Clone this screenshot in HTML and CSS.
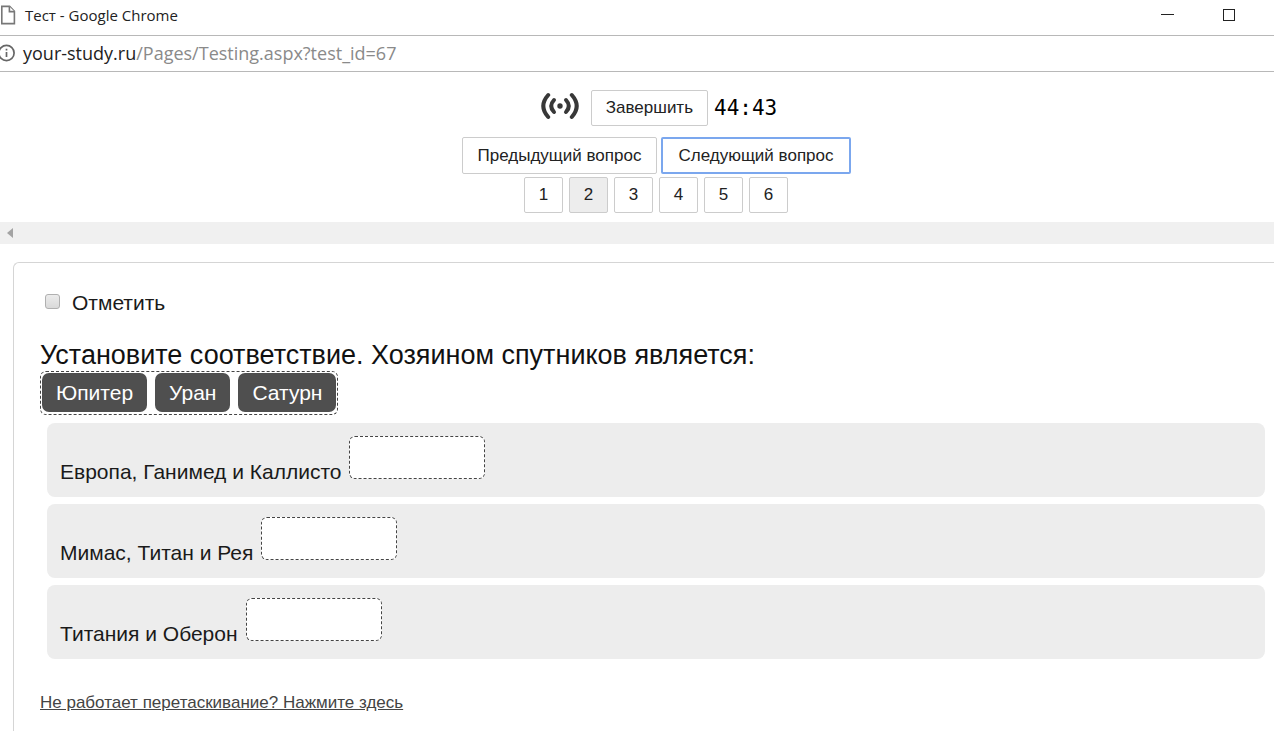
FILE: index.html
```html
<!DOCTYPE html>
<html lang="ru">
<head>
<meta charset="utf-8">
<title>Тест</title>
<link rel="stylesheet" href="styles.css">
</head>
<body>
<div class="titlebar">
  <svg class="page-icon" width="16" height="20" viewBox="0 0 16 20" fill="#fff" stroke="#777" stroke-width="1.6"><path d="M1.8 1.4h7.8l4.8 5v12.2H1.8z"/><path d="M9.4 1.6v5h5"/></svg>
  <span class="window-title">Тест - Google Chrome</span>
  <svg class="window-controls" width="80" height="20" viewBox="0 0 80 20" fill="none" stroke="#222"><path d="M1 9.5h13"/><rect x="63.5" y="4.5" width="11" height="11"/></svg>
</div>
<div class="addressbar">
  <svg class="info-icon" width="16" height="18" viewBox="0 0 16 18" fill="none" stroke="#666" stroke-width="1.7"><circle cx="6.5" cy="9" r="7.6"/><path d="M6.5 8v5M6.5 4.8v1.8"/></svg>
  <span class="url">your-study.ru<span class="url-path">/Pages/Testing.aspx?test_id=67</span></span>
</div>
<header class="controls">
  <div class="status">
    <svg class="signal" width="38" height="30" viewBox="0 0 38 30" fill="none" stroke="#383838" stroke-linecap="round"><circle cx="19" cy="15" r="2.7" fill="#383838" stroke="none"/><g stroke-width="4"><path d="M13 9Q7.4 15 13 21M25 9Q30.6 15 25 21"/><path d="M7.2 4Q-2.6 15 7.2 26M30.8 4Q40.6 15 30.8 26"/></g></svg>
    <button class="btn finish" type="button">Завершить</button>
    <span class="timer">44:43</span>
  </div>
  <div class="nav">
    <button class="btn nav-btn" type="button">Предыдущий вопрос</button>
    <button class="btn nav-btn focused" type="button">Следующий вопрос</button>
  </div>
  <nav class="pages">
    <button class="btn page" type="button">1</button>
    <button class="btn page current" type="button">2</button>
    <button class="btn page" type="button">3</button>
    <button class="btn page" type="button">4</button>
    <button class="btn page" type="button">5</button>
    <button class="btn page" type="button">6</button>
  </nav>
</header>
<div class="scrollbar"><svg width="6" height="10" viewBox="0 0 6 10" fill="#a3a3a3"><path d="M6 0v10L0 5z"/></svg></div>
<main class="card">
  <label class="mark"><input class="mark-box" type="checkbox">Отметить</label>
  <h1 class="question">Установите соответствие. Хозяином спутников является:</h1>
  <div class="bank">
    <span class="chip" draggable="true">Юпитер</span>
    <span class="chip" draggable="true">Уран</span>
    <span class="chip" draggable="true">Сатурн</span>
  </div>
  <div class="rows">
    <div class="row"><span class="row-text">Европа, Ганимед и Каллисто</span><span class="slot"></span></div>
    <div class="row"><span class="row-text">Мимас, Титан и Рея</span><span class="slot"></span></div>
    <div class="row"><span class="row-text">Титания и Оберон</span><span class="slot"></span></div>
  </div>
  <a class="help" href="#">Не работает перетаскивание? Нажмите здесь</a>
</main>
</body>
</html>
```
FILE: styles.css
```css
* { box-sizing: border-box; }
body {
  margin: 0;
  background: #fff;
  color: #1a1a1a;
  font-family: "Liberation Sans", Arial, sans-serif;
  overflow: hidden;
}
.titlebar, .addressbar {
  display: flex;
  align-items: center;
  height: 36px;
  border-bottom: 1px solid #b8b8b8;
  font-family: "Open Sans", "Segoe UI", sans-serif;
}
.titlebar { padding: 0 34px 6px 0; font-size: 15px; color: #222; }
.page-icon { margin-right: 9px; }
.window-controls { margin-left: auto; }
.addressbar { padding-bottom: 2px; }
.info-icon { margin-right: 7px; }
.url { font-size: 18px; color: #222; }
.url-path { color: #8a8a8a; }
.controls {
  display: flex;
  flex-direction: column;
  align-items: center;
  padding: 18px 0 9px 38px;
}
.status { display: flex; align-items: center; margin: 0 0 11px 6px; }
.signal { margin: 0 12px 4px 0; }
.btn {
  height: 36px;
  padding: 0;
  border: 1px solid #ccc;
  border-radius: 2px;
  background: #fff;
  color: #222;
  font-family: inherit;
  font-size: 17px;
}
.finish { padding: 0 14px; }
.timer {
  margin-left: 6px;
  color: #000;
  font-family: "DejaVu Sans Mono", monospace;
  font-size: 21px;
  line-height: 24px;
}
.nav { display: flex; gap: 4px; margin-bottom: 3px; }
.nav-btn { height: 37px; padding: 1px 15px 0; }
.focused { border: 2px solid #7ba7ee; }
.pages { display: flex; gap: 6px; }
.page { width: 39px; }
.current { background: #ededed; }
.scrollbar {
  display: flex;
  align-items: center;
  height: 22px;
  padding-left: 7px;
  background: #f0f0f0;
}
.card {
  margin: 18px 0 0 13px;
  padding: 27px 9px 24px 26px;
  border: 1px solid #d5d5d5;
  border-right: 0;
  border-radius: 6px 0 0 0;
}
.mark { display: flex; align-items: center; font-size: 21px; line-height: 26px; }
.mark-box {
  appearance: none;
  width: 15px;
  height: 15px;
  margin: 0 12px 3px 5px;
  border: 1px solid #b0b0b0;
  border-radius: 3px;
  background: linear-gradient(#ececec, #d9d9d9);
}
.question {
  margin: 24px 0 1px;
  font-size: 27px;
  font-weight: 400;
  line-height: 30px;
  color: #111;
}
.bank {
  display: flex;
  gap: 8px;
  width: fit-content;
  padding: 1px 1px 2px;
  border: 1px dashed #444;
  border-radius: 6px;
}
.chip {
  padding: 0 14px;
  border-radius: 7px;
  background: #4f4f4f;
  color: #fff;
  font-size: 21px;
  line-height: 39px;
}
.rows { display: grid; gap: 7px; margin: 8px 0 0 7px; }
.row {
  display: flex;
  align-items: flex-end;
  gap: 8px;
  padding: 13px 13px 18px;
  border-radius: 8px;
  background: #ededed;
}
.row-text { font-size: 21px; line-height: 26px; margin-bottom: -6px; }
.slot {
  width: 136px;
  height: 43px;
  border: 1px dashed #444;
  border-radius: 6px;
  background: #fff;
}
.help {
  display: block;
  width: fit-content;
  margin-top: 33px;
  color: #444;
  font-size: 17px;
  line-height: 22px;
}
```
